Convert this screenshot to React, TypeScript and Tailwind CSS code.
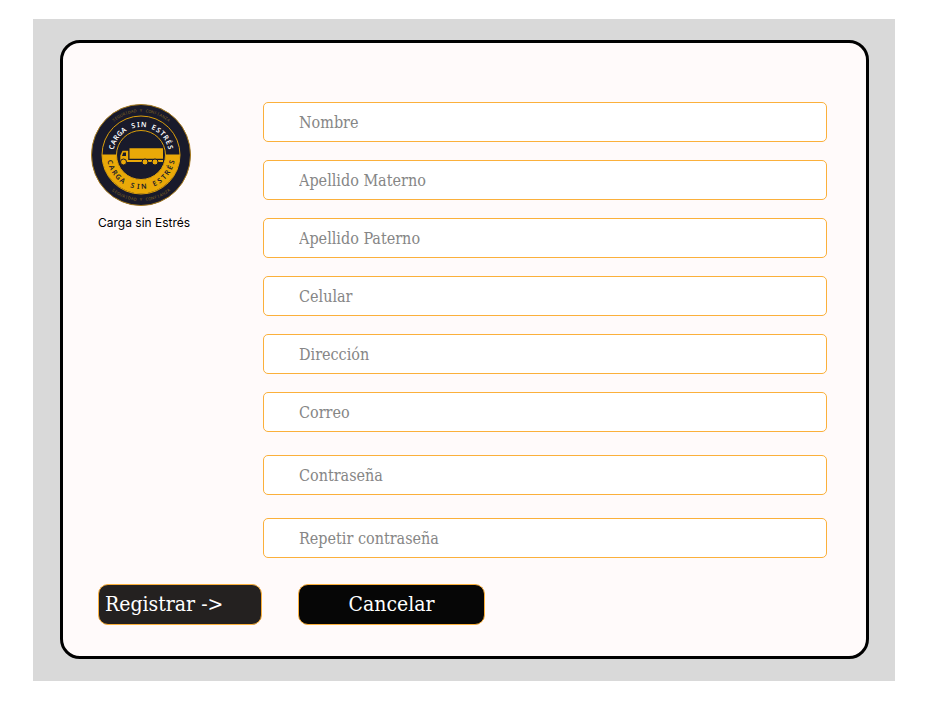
import React from "react";

const serif = "font-['DejaVu_Serif_Condensed','DejaVu_Serif',serif]";

type Field = { id: string; label: string; type: string };

const personal: Field[] = [
  { id: "nombre", label: "Nombre", type: "text" },
  { id: "materno", label: "Apellido Materno", type: "text" },
  { id: "paterno", label: "Apellido Paterno", type: "text" },
  { id: "celular", label: "Celular", type: "tel" },
  { id: "direccion", label: "Dirección", type: "text" },
  { id: "correo", label: "Correo", type: "email" },
];

const passwords: Field[] = [
  { id: "contrasena", label: "Contraseña", type: "password" },
  { id: "repetir", label: "Repetir contraseña", type: "password" },
];

function TextField({ id, label, type }: Field) {
  return (
    <input
      id={id}
      name={id}
      type={type}
      aria-label={label}
      placeholder={label}
      className={`${serif} block h-10 w-full rounded-[5px] border border-[#fbb03b] bg-white px-[35px] text-[16px] text-[#222] placeholder:text-[#868686] placeholder:opacity-100 outline-none`}
    />
  );
}

type RingProps = { text: string; radius: number; sweep: number; size: number; fill: string; weight: number; below?: boolean };

// Sets the characters of a text evenly round the badge's centre.
function RingText({ text, radius, sweep, size, fill, weight, below = false }: RingProps) {
  const chars = Array.from(text);
  return (
    <g fontFamily="'Noto Sans', sans-serif" fontSize={size} fontWeight={weight} fill={fill} textAnchor="middle">
      {chars.map((c, i) => {
        const turn = (i / (chars.length - 1) - 0.5) * sweep * (below ? -1 : 1);
        return (
          <text key={i} x="50" y={below ? 51 + radius : 51 - radius} transform={`rotate(${turn} 50 51)`}>
            {c}
          </text>
        );
      })}
    </g>
  );
}

function Logo() {
  return (
    <svg viewBox="0 0 100 102" className="h-[102px] w-[100px]" role="img" aria-label="Carga sin Estrés">
      <ellipse cx="50" cy="51" rx="49.500" ry="50.500" fill="#191a2b" stroke="#a77a1c" strokeWidth="1" />
      <circle cx="50" cy="51" r="39" fill="#191a2b" stroke="#dc9f0b" strokeWidth="1" />
      <path d="M11 50.500h78a39 39 0 0 1-78 0z" fill="#eaa908" />
      <circle cx="50" cy="51" r="24.500" fill="#191a2b" stroke="#dc9f0b" strokeWidth="1" />
      <RingText text="CARGA SIN ESTRÉS" radius={28} sweep={150} size={7} weight={600} fill="#fff" />
      <RingText text="CARGA SIN ESTRÉS" radius={34} sweep={154} size={7} weight={600} fill="#191a2b" below />
      <RingText text="SEGURIDAD Y CONFIANZA" radius={43} sweep={76} size={4} weight={400} fill="#8a6a20" />
      <RingText text="SEGURIDAD Y CONFIANZA" radius={46} sweep={76} size={4} weight={400} fill="#8a6a20" below />
      <g fill="#eaa908">
        <path d="M38.500 44.300H72v10.500H38.500z" />
        <path fillRule="evenodd" d="M31.500 46.800H37.200V56H72v2H29.300V51.500zM32.300 48.500 31 52H35v-3.500z" />
        <circle cx="32.500" cy="58" r="3" stroke="#191a2b" />
        <circle cx="54" cy="58" r="3" stroke="#191a2b" />
        <circle cx="64" cy="58" r="3" stroke="#191a2b" />
      </g>
    </svg>
  );
}

export default function App() {
  return (
    <main className="bg-white px-[33px] py-[19px]">
      <div className="bg-[#d9d9d9] pt-[21px] pr-[26px] pb-[22px] pl-[27px]">
        <form className="rounded-[20px] border-[3px] border-black bg-[#fffafa] pt-[59px] pr-[39px] pb-[31px] pl-[28px]" onSubmit={(e) => e.preventDefault()}>
          <div className="flex">
            <div className="w-[172px] shrink-0 pt-[2px]">
              <Logo />
              <p className="mt-2 pl-[7px] font-['Inter',sans-serif] text-xs leading-[18px] text-black">Carga sin Estrés</p>
            </div>
            <div className="flex min-w-0 flex-1 flex-col gap-[23px]">
              <div className="flex flex-col gap-[18px]">
                {personal.map((f) => <TextField key={f.id} {...f} />)}
              </div>
              <div className="flex flex-col gap-[23px]">
                {passwords.map((f) => <TextField key={f.id} {...f} />)}
              </div>
            </div>
          </div>
          <div className="mt-[26px] flex gap-9 pl-[7px]">
            <button type="submit" className={`${serif} h-[41px] w-[164px] rounded-[10px] border border-[#fbb03b] bg-[#242120] px-[6px] text-left text-[21px] text-white`}>Registrar -&gt;</button>
            <button type="button" className={`${serif} h-[41px] w-[187px] rounded-[10px] border border-[#fbb03b] bg-[#060606] text-center text-[21px] text-white`}>Cancelar</button>
          </div>
        </form>
      </div>
    </main>
  );
}
